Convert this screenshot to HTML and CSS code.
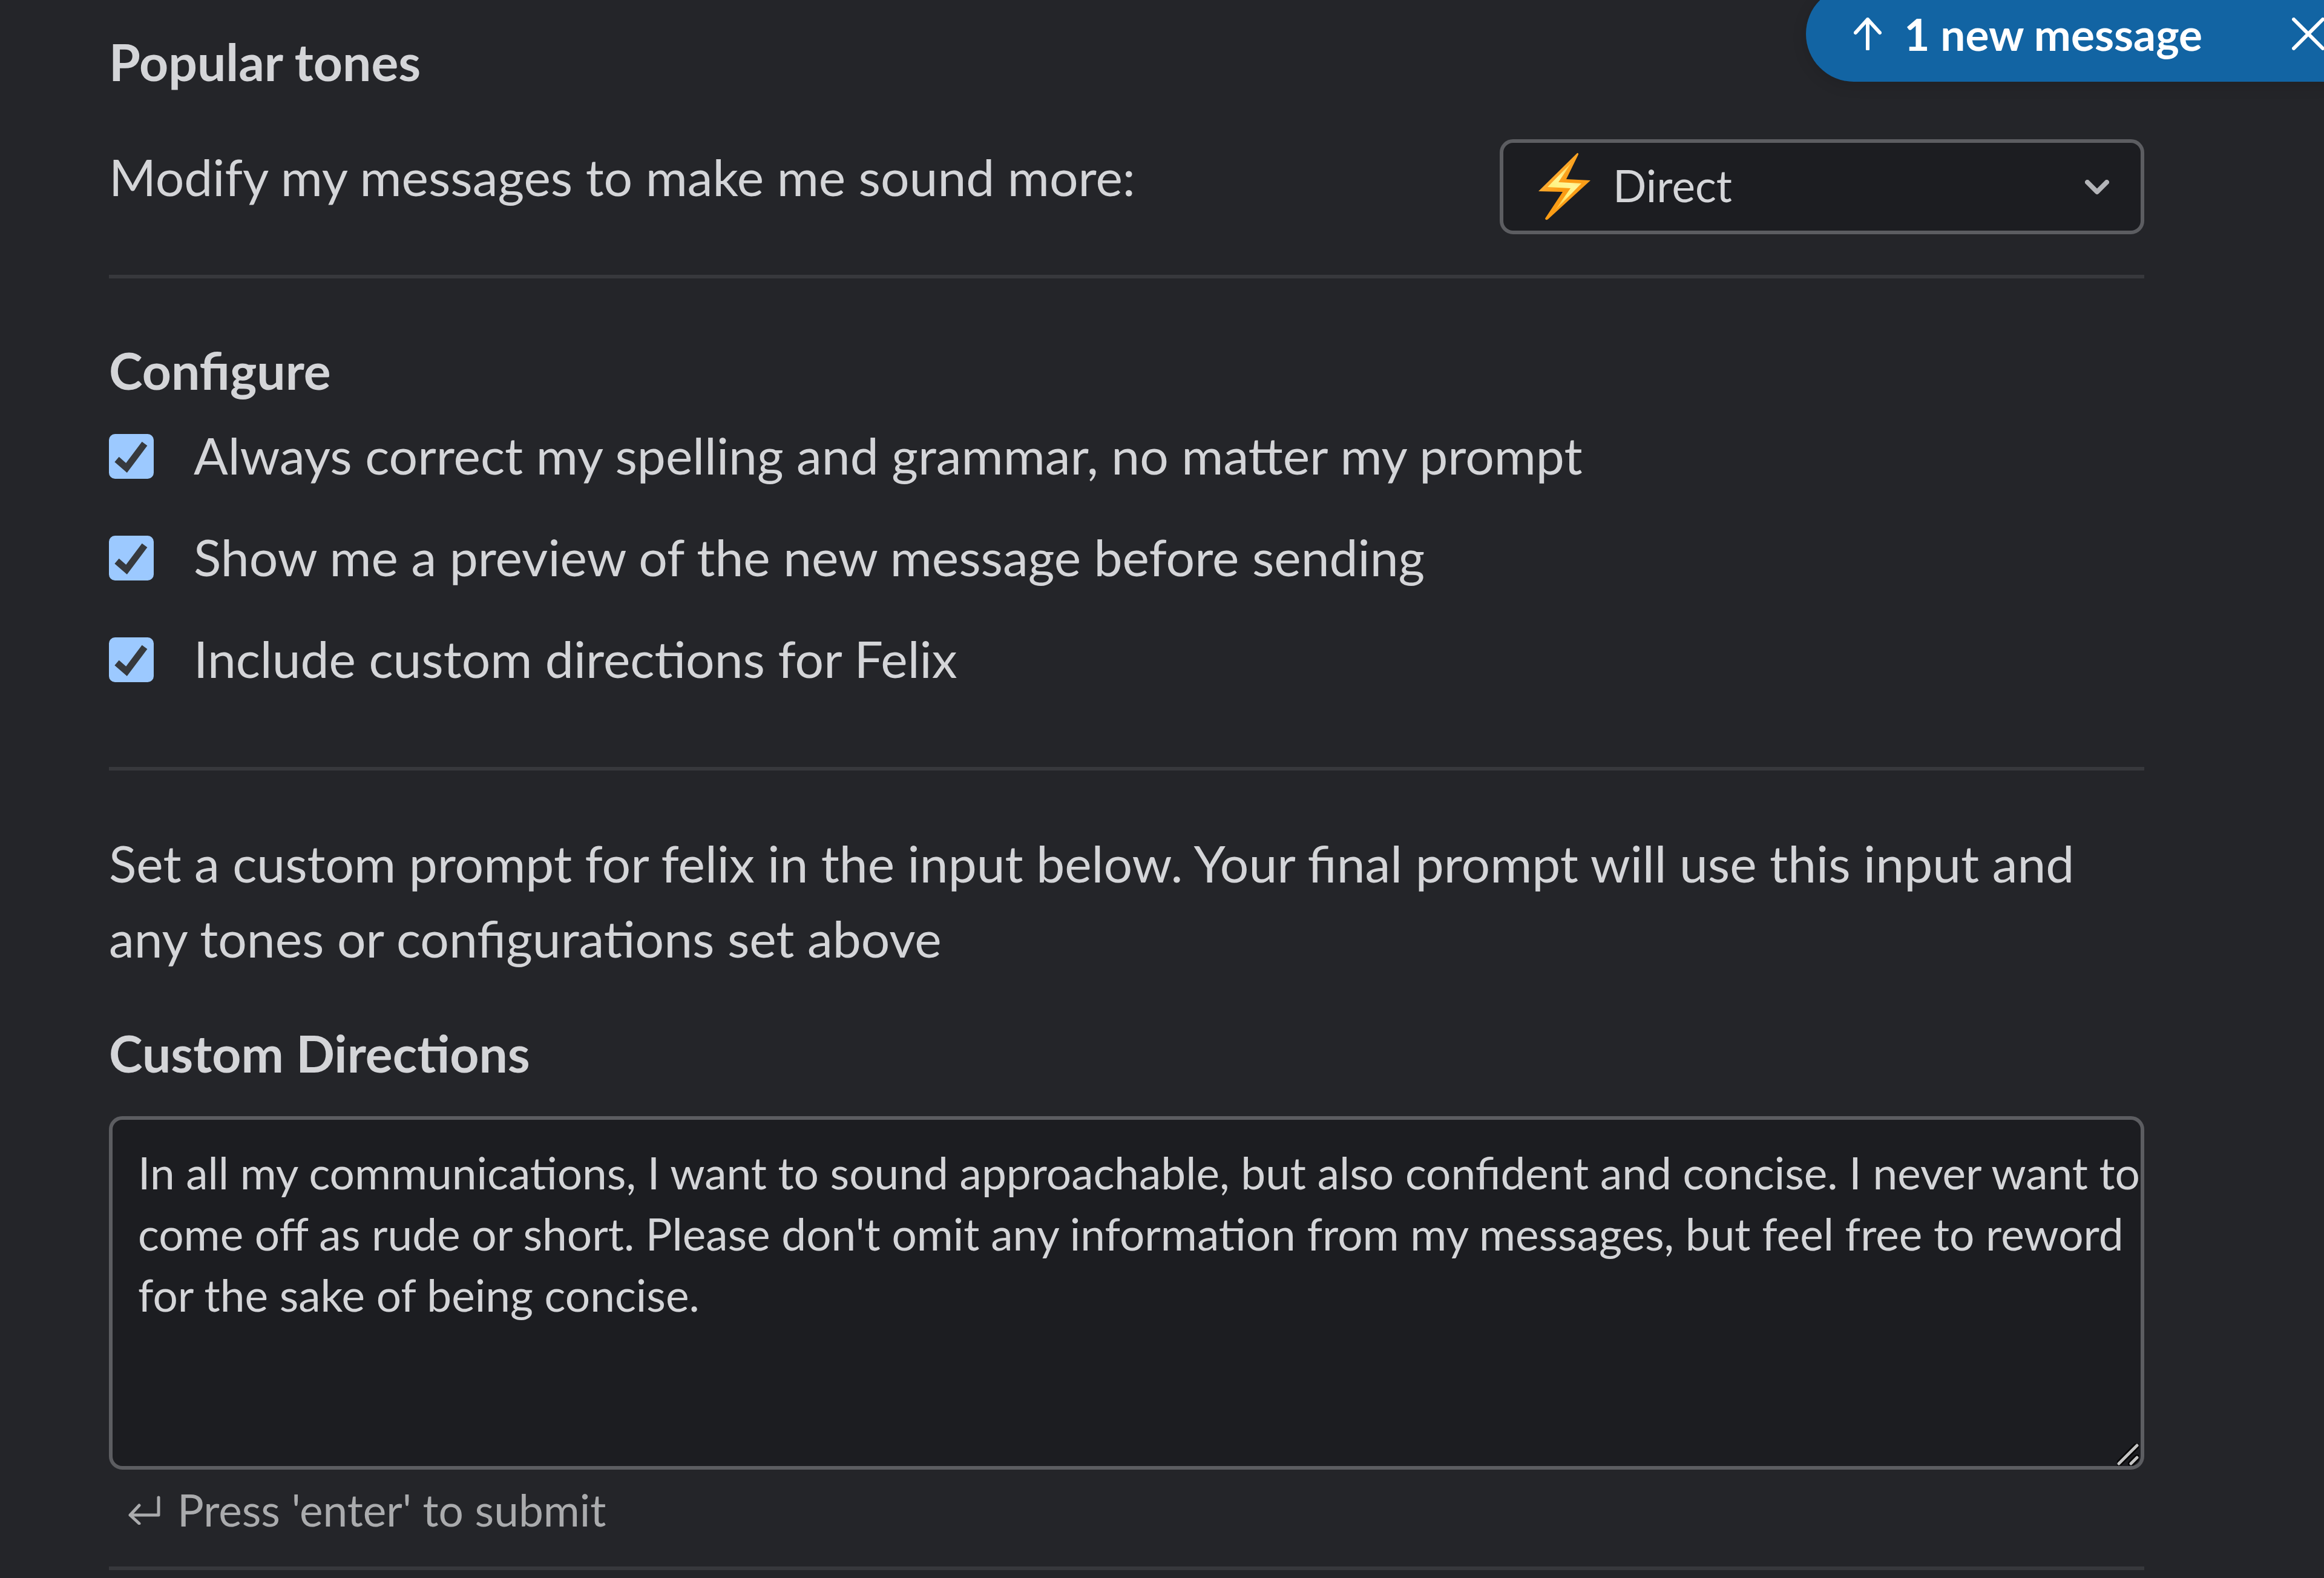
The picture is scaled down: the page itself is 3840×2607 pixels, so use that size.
FILE: index.html
```html
<!DOCTYPE html>
<html lang="en">
<head>
<meta charset="utf-8">
<meta name="viewport" content="width=device-width, initial-scale=1">
<title>Felix settings</title>
<link rel="stylesheet" href="styles.css">
</head>
<body>
<main class="settings">
  <section class="tones">
    <h2 class="heading">Popular tones</h2>
    <div class="tone-row">
      <label class="text" for="tone">Modify my messages to make me sound more:</label>
      <div class="picker">
        <select class="picker-select" id="tone">
          <option selected>Direct</option>
          <option>Friendly</option>
          <option>Formal</option>
        </select>
        <svg class="picker-bolt" viewBox="0 0 88 112" aria-hidden="true">
          <defs>
            <linearGradient id="bolt-edge" x1="0" y1="0" x2="1" y2="1">
              <stop offset="0" stop-color="#ffc05a"/>
              <stop offset="0.5" stop-color="#fb9b12"/>
              <stop offset="1" stop-color="#f7a325"/>
            </linearGradient>
            <linearGradient id="bolt-core" x1="0.7" y1="0" x2="0.3" y2="1">
              <stop offset="0" stop-color="#ffc93c"/>
              <stop offset="0.4" stop-color="#fff59a"/>
              <stop offset="0.65" stop-color="#fff27c"/>
              <stop offset="1" stop-color="#ffb52e"/>
            </linearGradient>
          </defs>
          <path d="M65 1 1 64 41 65 12 109Q13 113 17 110L87 46 47 44 67 3Q67 0 65 1Z" fill="url(#bolt-edge)"/>
          <path d="M56 16 16 57 54 59 28 96 72 51 34 49Z" fill="url(#bolt-core)"/>
        </svg>
        <svg class="picker-chevron" viewBox="0 0 40 26" aria-hidden="true">
          <path d="M4 4 20 20 36 4"/>
        </svg>
      </div>
    </div>
  </section>

  <section class="configure">
    <h2 class="heading">Configure</h2>
    <div class="options">
      <label class="option"><span class="tick"><input class="tick-input" type="checkbox" checked><svg class="tick-mark" viewBox="0 0 74 74" aria-hidden="true"><path d="M13 42 29 56 59 16"/></svg></span><span class="text">Always correct my spelling and grammar, no matter my prompt</span></label>
      <label class="option"><span class="tick"><input class="tick-input" type="checkbox" checked><svg class="tick-mark" viewBox="0 0 74 74" aria-hidden="true"><path d="M13 42 29 56 59 16"/></svg></span><span class="text">Show me a preview of the new message before sending</span></label>
      <label class="option"><span class="tick"><input class="tick-input" type="checkbox" checked><svg class="tick-mark" viewBox="0 0 74 74" aria-hidden="true"><path d="M13 42 29 56 59 16"/></svg></span><span class="text">Include custom directions for Felix</span></label>
    </div>
  </section>

  <section class="directions">
    <p class="text">Set a custom prompt for felix in the input below. Your final prompt will use this input and any tones or configurations set above</p>
    <label class="heading directions-label" for="directions">Custom Directions</label>
    <div class="editor">
      <textarea class="editor-input" id="directions" rows="5">In all my communications, I want to sound approachable, but also confident and concise. I never want to come off as rude or short. Please don't omit any information from my messages, but feel free to reword for the sake of being concise.</textarea>
      <svg class="editor-grip" viewBox="0 0 36 36" aria-hidden="true">
        <path class="grip-shade" d="M3 33 33 3M23 33 33 23"/>
        <path class="grip-line" d="M3 33 33 3M23 33 33 23"/>
      </svg>
    </div>
    <p class="hint">
      <svg class="hint-icon" viewBox="0 0 54 48" aria-hidden="true"><path d="M51 3V32H4M19 16 4 32 19 46"/></svg>
      <span>Press 'enter' to submit</span>
    </p>
  </section>
</main>

<div class="banner">
  <button class="banner-jump" type="button">
    <svg class="banner-arrow" viewBox="0 0 46 54" aria-hidden="true"><path d="M23 52V3M3 25 23 3 43 25"/></svg>
    <span>1 new message</span>
  </button>
  <button class="banner-close" type="button" aria-label="Dismiss">
    <svg class="banner-cross" viewBox="0 0 54 54" aria-hidden="true"><path d="M3 3 51 51M51 3 3 51"/></svg>
  </button>
</div>
</body>
</html>
```
FILE: styles.css
```css
* {
  box-sizing: border-box;
}

body {
  margin: 0;
  background: #242529;
  color: #d4d5d8;
  font-family: Lato, "Liberation Sans", sans-serif;
  font-size: 84px;
  line-height: 124px;
  overflow-x: hidden;
}

h2,
p {
  margin: 0;
}

svg {
  display: block;
  fill: none;
  stroke-linecap: round;
  stroke-linejoin: round;
}

button,
select,
textarea {
  margin: 0;
  font: inherit;
  color: inherit;
}

.settings {
  padding: 40px 297px 13px 180px;
}

.heading {
  font-size: 84px;
  font-weight: 700;
}

/* Sections, each closed by a rule */
.tones,
.configure,
.directions {
  display: flex;
  flex-direction: column;
  border-bottom: 6px solid #37383c;
}

.tones {
  gap: 66px;
  padding-bottom: 67px;
}

.configure {
  gap: 16px;
  padding: 90px 0 117px;
}

.directions {
  padding: 91px 0 43px;
}

.tone-row {
  display: flex;
  justify-content: space-between;
  align-items: flex-start;
}

/* Tone picker */
.picker {
  position: relative;
  width: 1065px;
}

.picker-select {
  display: block;
  width: 100%;
  height: 157px;
  padding: 0 160px 4px 181px;
  appearance: none;
  background: #1c1d21;
  border: 6px solid #5c5d61;
  border-radius: 22px;
  font-size: 73px;
  line-height: 101px;
}

.picker-bolt,
.picker-chevron {
  position: absolute;
  pointer-events: none;
}

.picker-bolt {
  left: 63px;
  top: 22px;
  width: 88px;
}

.picker-chevron {
  right: 58px;
  top: 67px;
  width: 40px;
  stroke: #b3b4b8;
  stroke-width: 8;
}

/* Tick boxes */
.options {
  display: flex;
  flex-direction: column;
  gap: 44px;
}

.option {
  display: flex;
  align-items: flex-start;
  gap: 66px;
}

.tick {
  position: relative;
  flex: none;
  width: 74px;
  height: 74px;
  margin-top: 27px;
}

.tick-input {
  display: block;
  width: 100%;
  height: 100%;
  margin: 0;
  appearance: none;
  border: 6px solid #868686;
  border-radius: 10px;
}

.tick-input:checked {
  background: #9cc9ff;
  border-color: #9cc9ff;
}

.tick-mark {
  position: absolute;
  inset: 0;
  visibility: hidden;
  stroke: #36393d;
  stroke-width: 11;
  stroke-linecap: butt;
  stroke-linejoin: miter;
  pointer-events: none;
}

.tick-input:checked + .tick-mark {
  visibility: visible;
}

/* Custom directions */
.directions-label {
  margin: 66px 0 42px;
}

.editor {
  position: relative;
}

.editor-input {
  display: block;
  width: 100%;
  height: 584px;
  padding: 37px 0 37px 42px;
  resize: none;
  overflow: hidden;
  background: #1c1d21;
  border: 6px solid #5c5d61;
  border-radius: 22px;
  font-size: 73px;
  line-height: 101px;
}

.editor-grip {
  position: absolute;
  right: 9px;
  bottom: 7px;
  width: 36px;
}

.grip-shade {
  stroke: #000;
  stroke-width: 10;
}

.grip-line {
  stroke: #c4c4c4;
  stroke-width: 5;
}

.hint {
  display: flex;
  align-items: center;
  gap: 28px;
  margin-top: 16px;
  padding-left: 31px;
  color: #aaabad;
  font-size: 73px;
  line-height: 101px;
}

.hint-icon {
  width: 54px;
  stroke: #aaabad;
  stroke-width: 5;
}

/* Unread banner, floating over the top right corner */
.banner {
  position: absolute;
  top: -23px;
  right: -80px;
  display: flex;
  align-items: center;
  height: 158px;
  border-radius: 79px;
  background: #1264a3;
  box-shadow: 0 6px 24px rgba(0, 0, 0, 0.12);
  color: #fff;
  font-size: 73px;
  font-weight: 700;
  line-height: 101px;
}

.banner-jump,
.banner-close {
  display: flex;
  align-items: center;
  padding: 0;
  background: none;
  border: 0;
}

.banner-jump {
  gap: 37px;
  padding: 0 74px 0 79px;
}

.banner-close {
  padding: 0 79px 0 74px;
}

.banner-arrow {
  width: 46px;
  stroke: #fff;
  stroke-width: 6;
}

.banner-cross {
  width: 54px;
  stroke: #fff;
  stroke-width: 6;
}
```
